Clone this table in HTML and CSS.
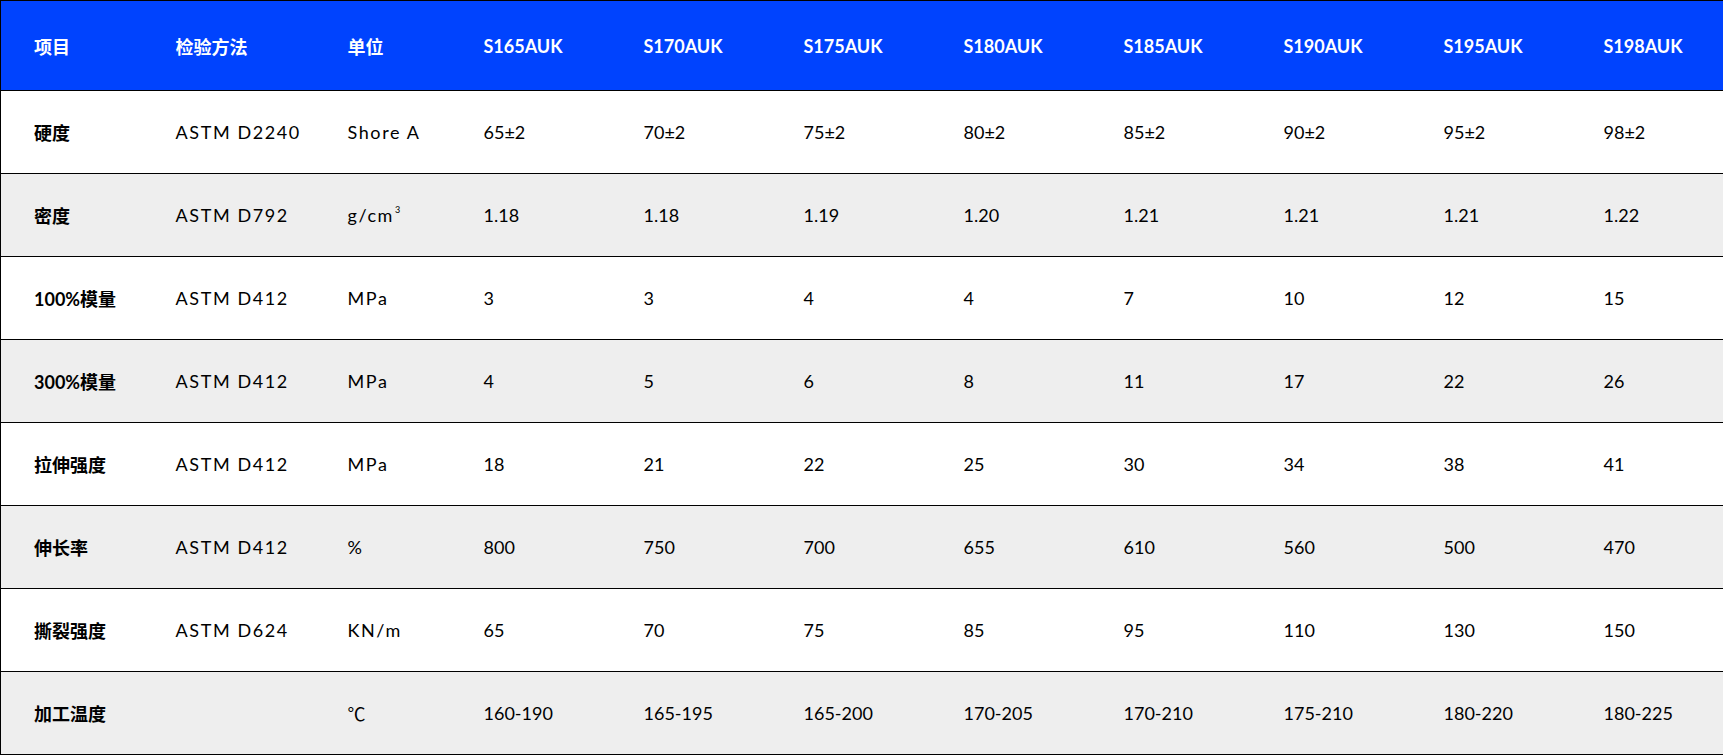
FILE: index.html
```html
<!DOCTYPE html>
<html lang="zh-CN">
<head>
<meta charset="utf-8">
<title>物性表</title>
<link rel="stylesheet" href="styles.css">
</head>
<body>
<table class="spec">
  <colgroup>
    <col class="c-item"><col class="c-method"><col class="c-unit">
    <col class="c-val"><col class="c-val"><col class="c-val"><col class="c-val">
    <col class="c-val"><col class="c-val"><col class="c-val"><col class="c-last">
  </colgroup>
  <thead>
    <tr>
      <th>项目</th><th>检验方法</th><th>单位</th>
      <th>S165AUK</th><th>S170AUK</th><th>S175AUK</th><th>S180AUK</th>
      <th>S185AUK</th><th>S190AUK</th><th>S195AUK</th><th>S198AUK</th>
    </tr>
  </thead>
  <tbody>
    <tr>
      <td class="name">硬度</td><td class="txt">ASTM D2240</td><td class="txt">Shore A</td>
      <td>65±2</td><td>70±2</td><td>75±2</td><td>80±2</td><td>85±2</td><td>90±2</td><td>95±2</td><td>98±2</td>
    </tr>
    <tr class="alt">
      <td class="name">密度</td><td class="txt">ASTM D792</td><td class="txt">g/cm<sup>3</sup></td>
      <td>1.18</td><td>1.18</td><td>1.19</td><td>1.20</td><td>1.21</td><td>1.21</td><td>1.21</td><td>1.22</td>
    </tr>
    <tr>
      <td class="name">100%模量</td><td class="txt">ASTM D412</td><td class="txt">MPa</td>
      <td>3</td><td>3</td><td>4</td><td>4</td><td>7</td><td>10</td><td>12</td><td>15</td>
    </tr>
    <tr class="alt">
      <td class="name">300%模量</td><td class="txt">ASTM D412</td><td class="txt">MPa</td>
      <td>4</td><td>5</td><td>6</td><td>8</td><td>11</td><td>17</td><td>22</td><td>26</td>
    </tr>
    <tr>
      <td class="name">拉伸强度</td><td class="txt">ASTM D412</td><td class="txt">MPa</td>
      <td>18</td><td>21</td><td>22</td><td>25</td><td>30</td><td>34</td><td>38</td><td>41</td>
    </tr>
    <tr class="alt">
      <td class="name">伸长率</td><td class="txt">ASTM D412</td><td class="txt">%</td>
      <td>800</td><td>750</td><td>700</td><td>655</td><td>610</td><td>560</td><td>500</td><td>470</td>
    </tr>
    <tr>
      <td class="name">撕裂强度</td><td class="txt">ASTM D624</td><td class="txt">KN/m</td>
      <td>65</td><td>70</td><td>75</td><td>85</td><td>95</td><td>110</td><td>130</td><td>150</td>
    </tr>
    <tr class="alt">
      <td class="name">加工温度</td><td class="txt"></td><td class="txt">℃</td>
      <td>160-190</td><td>165-195</td><td>165-200</td><td>170-205</td><td>170-210</td><td>175-210</td><td>180-220</td><td>180-225</td>
    </tr>
  </tbody>
</table>
</body>
</html>
```
FILE: styles.css
```css
html, body {
  margin: 0;
  padding: 0;
  background: #ffffff;
}

.spec {
  width: 1723px;
  table-layout: fixed;
  border-collapse: collapse;
  border: 1px solid #000000;
  font-family: Lato, "Noto Sans CJK SC", sans-serif;
  font-size: 18px;
  color: #000000;
}

.c-item { width: 142px; }
.c-method { width: 172px; }
.c-unit { width: 136px; }
.c-val { width: 160px; }
.c-last { width: 153px; }

.spec th,
.spec td {
  padding: 0 0 0 33px;
  text-align: left;
  white-space: nowrap;
  vertical-align: middle;
}

.spec thead th {
  background: #0043fe;
  color: #ffffff;
  font-weight: 700;
  height: 89px;
  border-bottom: 1px solid #000000;
}

.spec tbody td {
  height: 82px;
  border-bottom: 1px solid #000000;
  font-weight: 400;
}

.spec tbody td.txt {
  letter-spacing: 1.6px;
}

.spec tbody td.name {
  font-weight: 700;
}

.spec tbody tr.alt td {
  background: #eeeeee;
}

.spec sup {
  font-size: 9px;
  vertical-align: 9px;
  line-height: 0;
  margin-left: 1px;
  letter-spacing: 0;
}
```
